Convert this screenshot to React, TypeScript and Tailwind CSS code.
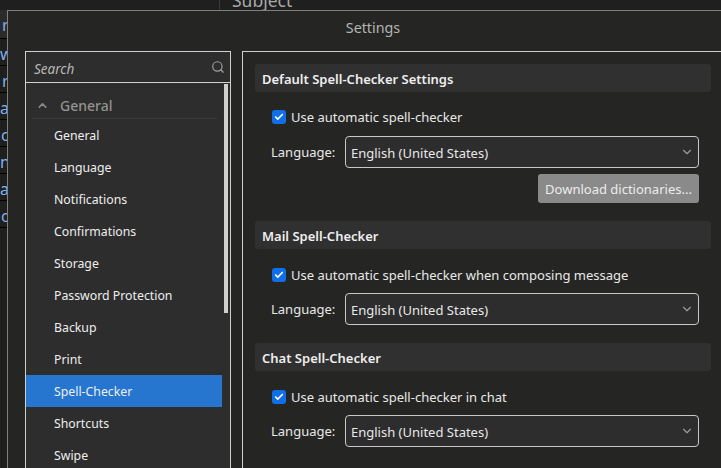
import React from 'react';
import { Check, ChevronDown, ChevronUp, Search } from 'lucide-react';

const font = { fontFamily: '"Noto Sans", sans-serif' };

const navItems = ['General', 'Language', 'Notifications', 'Confirmations', 'Storage', 'Password Protection', 'Backup', 'Print', 'Spell-Checker', 'Shortcuts', 'Swipe'];

const LanguageRow: React.FC = () => (
  <div className="flex items-center">
    <span className="w-[90px] shrink-0 pl-[16px] pt-[2px] text-[13px] text-[#e8e8e8] whitespace-nowrap">Language:</span>
    <div className="flex h-[32px] w-[354px] shrink-0 items-center justify-between rounded-[4px] border border-[#c8c8c8] bg-[#2d2d2d] pl-[5px] pr-[4px]">
      <span className="pt-[4px] text-[13px] text-[#e8e8e8]">English (United States)</span>
      <ChevronDown className="h-[14px] w-[14px] text-[#9a9a9a]" />
    </div>
  </div>
);

const CheckRow: React.FC<{ label: string }> = ({ label }) => (
  <div className="flex h-[20px] items-center gap-[5px] pl-[17px]">
    <span className="flex h-[14px] w-[14px] items-center justify-center rounded-[3px] bg-[#0f6fe8]">
      <Check className="h-[10px] w-[10px] text-white" strokeWidth={4} />
    </span>
    <span className="text-[13px] leading-[20px] text-[#e8e8e8]">{label}</span>
  </div>
);

const SectionHead: React.FC<{ title: string }> = ({ title }) => (
  <div className="flex h-[28px] w-[456px] items-center rounded-[3px] bg-[#303030] px-[7px] pt-[3px]">
    <span className="text-[13px] font-semibold text-[#eeeeee]">{title}</span>
  </div>
);

const strip = [
  { t: 'r', cls: 'h-[29px] bg-[#2b2b2b] pl-[2px]' },
  { t: 'w', cls: 'h-[27px] pl-0' },
  { t: 'r', cls: 'h-[27px] pl-[2px]' },
  { t: 'a', cls: 'h-[27px] pl-0' },
  { t: 'c', cls: 'h-[27px] pl-[1px]' },
  { t: 'nt', cls: 'h-[27px] pl-0' },
  { t: 'a', cls: 'h-[27px] pl-0' },
  { t: 'c', cls: 'h-[27px] pl-[1px]' },
];

export default function App() {
  return (
    <div className="relative h-[468px] w-[721px] overflow-hidden bg-[#1f1f1f]" style={font}>
      <div className="absolute left-[232px] top-[-13px] text-[17.5px] text-[#a8a8a8]">Subject</div>
      <div className="absolute left-[219px] top-0 h-[10px] w-px bg-[#3a3a3a]" />
      <div className="absolute left-0 top-[10px] flex flex-col">
        {strip.map((s, i) => (
          <div key={i} className={`w-[7px] overflow-hidden whitespace-nowrap border-b border-black text-[16px] leading-[31px] text-[#7fb2e6] ${s.cls}`}>{s.t}</div>
        ))}
      </div>

      <div className="absolute left-[7px] top-[10px] flex w-[720px] flex-col border border-[#808080] bg-[#252624]">
        <div className="flex h-[34px] shrink-0 items-center justify-center pl-[12px] text-[14.3px] text-[#b4b4b4]">Settings</div>
        <div className="flex gap-[11px] pl-[17px] pt-[6px]">
          <div className="flex h-[430px] w-[206px] shrink-0 flex-col border border-[#d0d0d0] bg-[#2d2d2d]">
            <div className="flex h-[31px] shrink-0 items-center justify-between border-b border-[#d0d0d0] pl-[8px] pr-[5px]">
              <span className="pt-[4px] text-[13.5px] italic text-[#b8b8b8]">Search</span>
              <Search className="h-[14px] w-[14px] text-[#a0a0a0]" />
            </div>
            <div className="flex flex-1">
              <div className="w-[196px]">
                <div className="ml-[6px] mr-[5px] mt-[8px] flex h-[28px] items-center gap-[11px] border-b border-[#3a3a3a] pl-[4px] pt-[2px]">
                  <ChevronUp className="h-[13px] w-[13px] text-[#8a8a8a]" strokeWidth={3} />
                  <span className="text-[14px] font-medium text-[#939393]">General</span>
                </div>
                {navItems.map(item => (
                  <div key={item} className={`flex h-[32px] items-center pl-[28px] pt-[2px] text-[12.3px] text-[#eeeeee] ${item === 'Spell-Checker' ? 'bg-[#2676cf]' : ''}`}>
                    {item}
                  </div>
                ))}
              </div>
              <div className="ml-[2px] mt-[1px] h-[229px] w-[4px] bg-[#d0d0d0]" />
            </div>
          </div>

          <div className="flex h-[430px] w-[490px] shrink-0 flex-col border border-[#d0d0d0] px-[12px] pt-[12px]">
            <SectionHead title="Default Spell-Checker Settings" />
            <div className="mt-[15px] flex flex-col gap-[9px]">
              <CheckRow label="Use automatic spell-checker" />
              <LanguageRow />
            </div>
            <div className="mt-[6px] flex w-[444px] justify-end">
              <div className="flex h-[29px] w-[161px] items-center justify-center rounded-[3px] bg-[#8a8a8a] pt-[2px] text-[13px] text-[#ececec]">Download dictionaries...</div>
            </div>
            <div className="mt-[18px]"><SectionHead title="Mail Spell-Checker" /></div>
            <div className="mt-[16px] flex flex-col gap-[8px]">
              <CheckRow label="Use automatic spell-checker when composing message" />
              <LanguageRow />
            </div>
            <div className="mt-[18px]"><SectionHead title="Chat Spell-Checker" /></div>
            <div className="mt-[16px] flex flex-col gap-[8px]">
              <CheckRow label="Use automatic spell-checker in chat" />
              <LanguageRow />
            </div>
          </div>
        </div>
      </div>
    </div>
  );
}
